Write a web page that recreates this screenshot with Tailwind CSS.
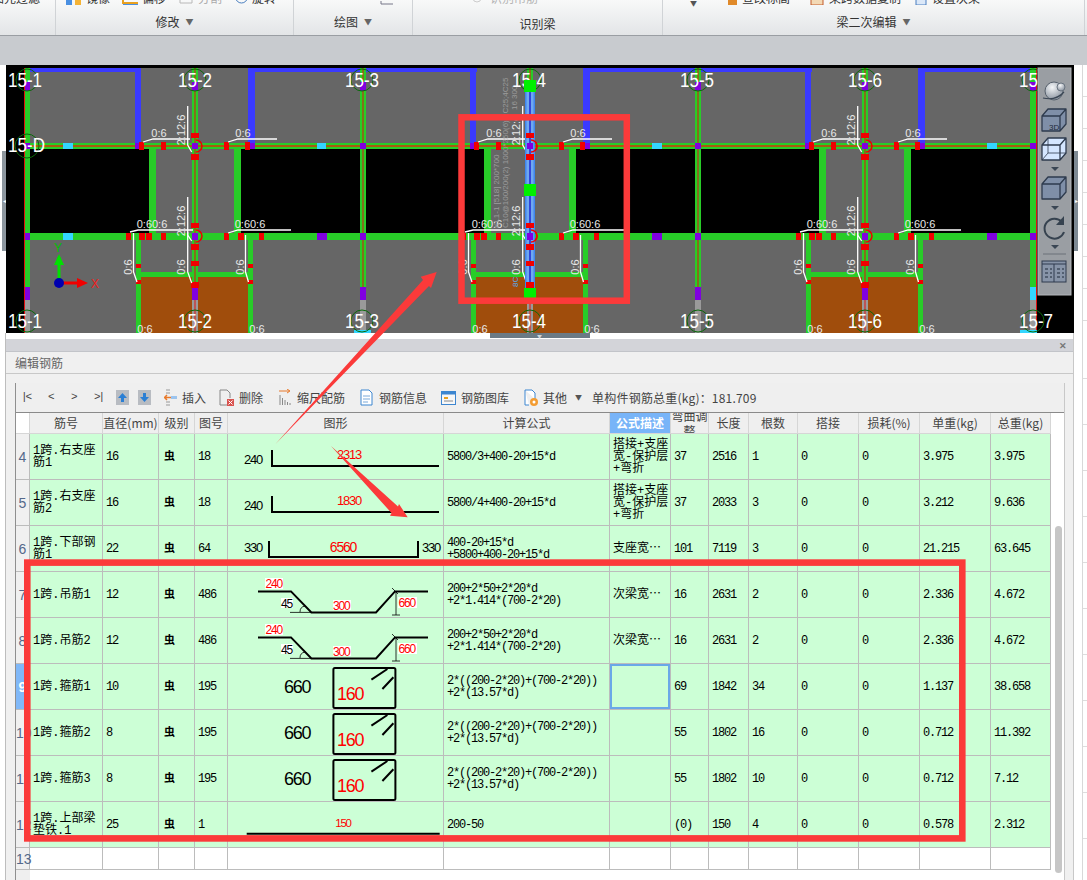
<!DOCTYPE html>
<html lang="zh">
<head>
<meta charset="utf-8">
<title>编辑钢筋</title>
<script src="https://cdn.jsdelivr.net/npm/@tailwindcss/browser@4"></script>
</head>
<body class="m-0">
<div class="relative w-[1087px] h-[880px] overflow-hidden bg-white [font-family:'Noto_Sans_CJK_SC',sans-serif]">

  <!-- Ribbon, cut off at the top -->
  <div class="flex h-[36px] overflow-hidden border-b border-[#9a9ea3] bg-linear-to-b from-[#f8f9f9] to-[#e3e5e7] text-[12px] leading-[14px] text-[#333]">
    <div class="w-[56px] shrink-0 border-r border-[#d0d3d6]">
      <div class="-mt-[9px] -ml-[8px] h-[14px] whitespace-nowrap">图元过滤</div>
    </div>
    <div class="w-[238px] shrink-0 border-r border-[#d0d3d6]">
      <div class="-mt-[9px] flex h-[14px] items-center whitespace-nowrap pl-[10px]">
        <svg class="w-[16px] h-[14px]" viewBox="0 0 16 14"><rect x="0" y="3" width="6" height="11" fill="#4a90e2"/><rect x="9" y="3" width="6" height="11" fill="#f5b335"/></svg>
        <span class="ml-[4px]">镜像</span>
        <svg class="ml-[12px] w-[17px] h-[14px]" viewBox="0 0 17 14"><path d="M1 0V12H16" fill="none" stroke="#e8a020" stroke-width="2"/><path d="M1 13.500H16" stroke="#4a90e2" stroke-width="1"/></svg>
        <span class="ml-[3px]">偏移</span>
        <svg class="ml-[12px] w-[15px] h-[14px]" viewBox="0 0 15 14"><path d="M2 0V12H14V0" fill="none" stroke="#b8b8b8"/></svg>
        <span class="ml-[5px] text-[#aaa]">分割</span>
        <svg class="ml-[13px] w-[13px] h-[14px]" viewBox="0 0 13 14"><circle cx="6.500" cy="6" r="6" fill="none" stroke="#4a7fc0"/></svg>
        <span class="ml-[4px]">旋转</span>
      </div>
      <div class="mt-[10px] flex items-center justify-center gap-[6px]">
        <span>修改</span><span class="text-[8px] text-[#666]">▼</span>
      </div>
    </div>
    <div class="w-[119px] shrink-0 border-r border-[#d0d3d6]">
      <div class="-mt-[9px] flex h-[14px] justify-end pr-[18px]">
        <svg class="w-[14px] h-[14px]" viewBox="0 0 14 14"><path d="M1 13H13M1 13V10" fill="none" stroke="#778"/></svg>
      </div>
      <div class="mt-[10px] flex items-center justify-center gap-[6px]">
        <span>绘图</span><span class="text-[8px] text-[#666]">▼</span>
      </div>
    </div>
    <div class="w-[250px] shrink-0 border-r border-[#d0d3d6]">
      <div class="-mt-[9px] flex h-[14px] items-center whitespace-nowrap pl-[59px] text-[#b5b5b5]">
        <svg class="w-[12px] h-[14px]" viewBox="0 0 12 14"><circle cx="5" cy="7" r="4" fill="none" stroke="#ccc"/></svg>
        <span class="ml-[6px]">识别吊筋</span>
      </div>
      <div class="mt-[12px] text-center">识别梁</div>
    </div>
    <div class="w-[422px] shrink-0 border-r border-[#d0d3d6]">
      <div class="-mt-[9px] flex h-[14px] items-center whitespace-nowrap pl-[27px]">
        <span class="mt-[10px] text-[7px] text-[#555]">▼</span>
        <svg class="ml-[30px] w-[11px] h-[14px]" viewBox="0 0 11 14"><rect x="1" y="4" width="9" height="10" fill="#e08a2a"/></svg>
        <span class="ml-[4px]">查改标高</span>
        <svg class="ml-[20px] w-[14px] h-[14px]" viewBox="0 0 14 14"><rect x="1" y="2" width="12" height="12" fill="#f3d9b5" stroke="#c25a2a"/></svg>
        <span class="ml-[5px]">梁跨数据复制</span>
        <svg class="ml-[14px] w-[12px] h-[14px]" viewBox="0 0 12 14"><rect x="1" y="2" width="10" height="12" fill="#dbe8f8" stroke="#4a7fc0"/></svg>
        <span class="ml-[5px]">设置次梁</span>
      </div>
      <div class="mt-[10px] flex items-center justify-center gap-[6px]">
        <span>梁二次编辑</span><span class="text-[8px] text-[#666]">▼</span>
      </div>
    </div>
  </div>
  <div class="h-[29px] bg-[#c8cbcf]"></div>

  <!-- Drawing area -->
  <div class="flex h-[268px]">
    <div class="w-[6px] shrink-0 bg-white pt-[86px] pl-[2px]">
      <div class="flex h-[100px] w-[4px] items-center justify-center bg-[#8d979f] text-[6px] leading-none text-white">◂</div>
    </div>
    <svg class="block w-[1068px] h-[268px] shrink-0" viewBox="6 65 1068 268" font-family="'Liberation Sans',sans-serif">
      <defs>
        <radialGradient id="ball" cx="0.4" cy="0.3" r="0.8">
          <stop offset="0" stop-color="#f4f6f8"/><stop offset="1" stop-color="#7d8794"/>
        </radialGradient>
        <g id="bay">
          <!-- beams around the axis -->
          <rect x="135" y="68" width="6" height="75" fill="#3a3aff"/>
          <rect x="248" y="68" width="7" height="75" fill="#3a3aff"/>
          <rect x="135" y="143" width="6" height="6" fill="#8000e0"/>
          <rect x="248" y="143" width="7" height="6" fill="#8000e0"/>
          <rect x="149" y="149" width="7" height="84" fill="#28cc28"/>
          <rect x="234" y="149" width="7" height="84" fill="#28cc28"/>
          <rect x="141" y="277" width="107" height="56" fill="#a04d0c"/>
          <rect x="136" y="240" width="5" height="93" fill="#28cc28"/>
          <rect x="248" y="240" width="5" height="93" fill="#28cc28"/>
          <rect x="136" y="272" width="117" height="5" fill="#28cc28"/>
          <!-- axis -->
          <rect x="192" y="68" width="6" height="232" fill="#28cc28"/>
          <rect x="194.500" y="68" width="1" height="232" fill="#e01010"/>
          <rect x="192" y="82" width="6" height="9" fill="#8000e0"/>
          <rect x="192" y="143" width="6" height="6" fill="#8000e0"/>
          <rect x="192" y="233" width="6" height="7" fill="#8000e0"/>
          <rect x="192" y="287" width="6" height="13" fill="#8000e0"/>
          <rect x="192" y="300" width="6" height="33" fill="#9a9a9a"/>
          <rect x="194.500" y="300" width="1" height="33" fill="#e01010"/>
          <!-- red marks -->
          <g fill="#f00000">
            <rect x="139" y="142" width="5" height="8"/><rect x="161" y="142" width="5" height="8"/>
            <rect x="224" y="142" width="5" height="8"/><rect x="245" y="142" width="5" height="8"/>
            <rect x="126" y="233" width="5" height="7"/><rect x="139" y="233" width="6" height="7"/>
            <rect x="146" y="233" width="6" height="7"/><rect x="161" y="233" width="5" height="7"/>
            <rect x="224" y="233" width="5" height="7"/><rect x="238" y="233" width="6" height="7"/>
            <rect x="259" y="233" width="5" height="7"/>
            <rect x="191" y="133" width="8" height="5"/><rect x="191" y="154" width="8" height="6"/>
            <rect x="191" y="223" width="8" height="5"/><rect x="191" y="244" width="8" height="6"/>
            <rect x="191" y="261" width="8" height="5"/><rect x="191" y="282" width="8" height="6"/>
            <rect x="136" y="264" width="5" height="4"/><rect x="136" y="280" width="5" height="4"/>
            <rect x="248" y="264" width="5" height="4"/><rect x="248" y="280" width="5" height="4"/>
          </g>
          <path d="M196 140A6 6 0 0 1 196 152M196 230A6 6 0 0 1 196 242" fill="none" stroke="#f00000" stroke-width="1.500"/>
          <!-- white leader lines -->
          <g fill="none" stroke="#ffffff" stroke-width="1.300">
            <path d="M143 142L153 139H190"/><path d="M228 142L238 139H277"/>
            <path d="M130 232L138 230H193"/><path d="M228 233L238 230H291"/>
            <path d="M187.700 106V145L191.700 152"/><path d="M187.700 197V235L191.700 241"/>
            <path d="M187.700 232V272L191.700 283"/><path d="M133.500 233V272L137 282"/>
            <path d="M245.500 235V272L248.500 282"/>
          </g>
          <g fill="#e8e8e8" font-size="11" text-anchor="middle">
            <text x="159" y="137">0:6</text><text x="243" y="137">0:6</text>
            <text x="152" y="228">0:60:6</text><text x="250" y="228">0:60:6</text>
            <text x="145" y="333">0:6</text><text x="257" y="333">0:6</text>
            <text transform="translate(185 130) rotate(-90)">2:12:6</text>
            <text transform="translate(185 221) rotate(-90)">2:12:6</text>
            <text transform="translate(185 267) rotate(-90)">0:6</text>
            <text transform="translate(132 267) rotate(-90)">0:6</text>
            <text transform="translate(244 267) rotate(-90)">0:6</text>
          </g>
        </g>
      </defs>
      <rect x="6" y="65" width="1068" height="268" fill="#000000"/>
      <rect x="24" y="68" width="1012" height="265" fill="#666666"/>
      <g fill="#000000">
        <rect x="30" y="149" width="119" height="84"/><rect x="241" y="149" width="119" height="84"/>
        <rect x="366" y="149" width="118" height="84"/><rect x="576" y="149" width="119" height="84"/>
        <rect x="701" y="149" width="119" height="84"/><rect x="911" y="149" width="119" height="84"/>
      </g>
      <g fill="#3a3aff">
        <rect x="24" y="68" width="117" height="4"/><rect x="248" y="68" width="229" height="4"/>
        <rect x="584" y="68" width="228" height="4"/><rect x="919" y="68" width="111" height="4"/>
      </g>
      <rect x="24" y="143" width="1012" height="6" fill="#28cc28"/>
      <rect x="24" y="145" width="1012" height="2" fill="#a85a10"/>
      <rect x="24" y="233" width="1012" height="7" fill="#28cc28"/>
      <g fill="#33d6ff">
        <rect x="63" y="143" width="10" height="6"/><rect x="63" y="233" width="10" height="7"/>
        <rect x="317" y="143" width="9" height="6"/><rect x="652" y="143" width="10" height="6"/>
        <rect x="987" y="143" width="10" height="6"/>
      </g>
      <g fill="#8000e0">
        <rect x="317" y="233" width="10" height="7"/><rect x="652" y="233" width="10" height="7"/>
        <rect x="987" y="233" width="10" height="7"/>
      </g>
      <!-- outer axes -->
      <g fill="#28cc28">
        <rect x="25" y="68" width="5" height="232"/><rect x="360" y="68" width="6" height="232"/>
        <rect x="695" y="68" width="6" height="232"/><rect x="1030" y="68" width="6" height="220"/>
      </g>
      <g fill="#e01010">
        <rect x="24" y="68" width="1" height="265"/><rect x="362.500" y="68" width="1" height="232"/>
        <rect x="697.500" y="68" width="1" height="232"/><rect x="1036" y="68" width="1" height="265"/>
      </g>
      <g fill="#8000e0">
        <rect x="25" y="82" width="5" height="9"/><rect x="360" y="82" width="6" height="9"/>
        <rect x="695" y="82" width="6" height="9"/><rect x="1030" y="82" width="6" height="9"/>
        <rect x="25" y="143" width="5" height="6"/><rect x="360" y="143" width="6" height="6"/>
        <rect x="695" y="143" width="6" height="6"/><rect x="1030" y="143" width="6" height="6"/>
        <rect x="25" y="233" width="5" height="7"/><rect x="360" y="233" width="6" height="7"/>
        <rect x="695" y="233" width="6" height="7"/><rect x="1030" y="233" width="6" height="7"/>
        <rect x="25" y="287" width="5" height="13"/><rect x="360" y="287" width="6" height="13"/>
        <rect x="695" y="287" width="6" height="13"/>
      </g>
      <g fill="#9a9a9a">
        <rect x="25" y="300" width="5" height="33"/><rect x="360" y="300" width="6" height="33"/>
        <rect x="695" y="300" width="6" height="33"/><rect x="1030" y="300" width="6" height="33"/>
      </g>
      <rect x="1030" y="287" width="6" height="13" fill="#33d6ff"/>
      <g fill="#33d6ff">
        <rect x="354" y="330" width="17" height="3"/><rect x="521" y="330" width="17" height="3"/>
        <rect x="857" y="330" width="17" height="3"/><rect x="1020" y="330" width="17" height="3"/>
      </g>

      <use href="#bay"/>
      <use href="#bay" x="335"/>
      <use href="#bay" x="670"/>

      <!-- selected beam on axis 15-4 -->
      <rect x="525" y="86" width="10" height="206" fill="#3f86ee"/>
      <rect x="526.500" y="86" width="7" height="206" fill="#6fa8f0"/>
      <rect x="529" y="86" width="2" height="206" fill="#3346d8"/>
      <g fill="#f00000">
        <rect x="526" y="133" width="8" height="5"/><rect x="526" y="154" width="8" height="6"/>
        <rect x="526" y="223" width="8" height="5"/><rect x="526" y="244" width="8" height="6"/>
        <rect x="526" y="261" width="8" height="5"/><rect x="526" y="282" width="8" height="6"/>
      </g>
      <rect x="527" y="143" width="6" height="6" fill="#8000e0"/>
      <rect x="527" y="233" width="6" height="7" fill="#8000e0"/>
      <path d="M531 140A6 6 0 0 1 531 152M531 230A6 6 0 0 1 531 242" fill="none" stroke="#f00000" stroke-width="1.500"/>
      <g fill="#9c9c9c" font-size="8">
        <text transform="translate(499 228) rotate(-90)">KL1-1 [518] 200*700</text>
        <text transform="translate(508 228) rotate(-90)">C10@100/200(2) 1000*250(6) 2C25;4C25</text>
        <text transform="translate(517 110) rotate(-90)">16 300</text>
      </g>
      <text transform="translate(518 287) rotate(-90)" font-size="8" fill="#55aaee">8C</text>

      <!-- axis marks -->
      <g fill="none" stroke="#0a6a0a">
        <circle cx="27" cy="80" r="11"/><circle cx="195" cy="80" r="11"/><circle cx="362" cy="80" r="11"/>
        <circle cx="530" cy="80" r="11"/><circle cx="698" cy="80" r="11"/><circle cx="865" cy="80" r="11"/><circle cx="1033" cy="80" r="11"/>
        <circle cx="27" cy="146" r="12"/>
        <circle cx="27" cy="321" r="11"/><circle cx="195" cy="321" r="11"/><circle cx="362" cy="321" r="11"/>
        <circle cx="530" cy="321" r="11"/><circle cx="698" cy="321" r="11"/><circle cx="865" cy="321" r="11"/><circle cx="1033" cy="321" r="11"/>
      </g>
      <g fill="#ffffff" font-size="20">
        <text x="8" y="87" textLength="34" lengthAdjust="spacingAndGlyphs">15-1</text>
        <text x="178" y="87" textLength="34" lengthAdjust="spacingAndGlyphs">15-2</text>
        <text x="345" y="87" textLength="34" lengthAdjust="spacingAndGlyphs">15-3</text>
        <text x="512" y="87" textLength="34" lengthAdjust="spacingAndGlyphs">15-4</text>
        <text x="680" y="87" textLength="34" lengthAdjust="spacingAndGlyphs">15-5</text>
        <text x="848" y="87" textLength="34" lengthAdjust="spacingAndGlyphs">15-6</text>
        <text x="1019" y="87" textLength="34" lengthAdjust="spacingAndGlyphs">15-7</text>
        <text x="8" y="152" textLength="37" lengthAdjust="spacingAndGlyphs">15-D</text>
        <text x="8" y="328" textLength="34" lengthAdjust="spacingAndGlyphs">15-1</text>
        <text x="178" y="328" textLength="34" lengthAdjust="spacingAndGlyphs">15-2</text>
        <text x="345" y="328" textLength="34" lengthAdjust="spacingAndGlyphs">15-3</text>
        <text x="512" y="328" textLength="34" lengthAdjust="spacingAndGlyphs">15-4</text>
        <text x="680" y="328" textLength="34" lengthAdjust="spacingAndGlyphs">15-5</text>
        <text x="848" y="328" textLength="34" lengthAdjust="spacingAndGlyphs">15-6</text>
        <text x="1019" y="328" textLength="34" lengthAdjust="spacingAndGlyphs">15-7</text>
      </g>
      <g fill="#00f000">
        <rect x="524" y="80" width="12" height="12"/><rect x="524" y="184" width="12" height="12"/><rect x="524" y="288" width="12" height="10"/>
      </g>

      <!-- XY gizmo -->
      <path d="M59 279V257" stroke="#00e000" stroke-width="3"/>
      <path d="M54 265L59 254L64 265Z" fill="#00e000"/>
      <text x="54" y="252" font-size="12" fill="#00c000">Y</text>
      <path d="M59 283H80" stroke="#f00000" stroke-width="3"/>
      <path d="M77 278L88 283L77 288Z" fill="#f00000"/>
      <text x="91" y="288" font-size="12" fill="#f02020">X</text>
      <circle cx="59" cy="283" r="5" fill="#0000b0"/>

      <!-- view tools -->
      <rect x="1038" y="68" width="33" height="227" fill="#9a9ea3" stroke="#b4b7ba"/>
      <circle cx="1054" cy="91" r="9" fill="url(#ball)" stroke="#56606c"/>
      <circle cx="1061" cy="87" r="4" fill="url(#ball)" stroke="#6a7480"/>
      <path d="M1043 98Q1056 101 1064 92" fill="none" stroke="#3a4654" stroke-width="1.200"/>
      <g stroke="#2e3b4e" stroke-width="1.300" stroke-linejoin="round">
        <path d="M1042 116H1060V131H1042ZM1042 116L1048 109H1066V124L1060 131M1060 116L1066 109" fill="#7f8fa8"/>
        <path d="M1042 145H1060V160H1042ZM1042 145L1048 138H1066V153L1060 160M1060 145L1066 138" fill="#d4e6ff"/>
        <path d="M1048 138V153H1066M1048 153L1042 160" fill="none" stroke-width="0.800"/>
        <path d="M1042 184H1060V199H1042ZM1042 184L1048 177H1066V192L1060 199M1060 184L1066 177" fill="#7f8fa8"/>
      </g>
      <text x="1049" y="130" font-size="8" fill="#1e2a3a">3D</text>
      <g fill="#3a4654">
        <path d="M1051 167H1059L1055 171Z"/><path d="M1051 206H1059L1055 210Z"/><path d="M1051 245H1059L1055 249Z"/>
      </g>
      <path d="M1062 222A10 10 0 1 0 1064 232" fill="none" stroke="#36424f" stroke-width="2"/>
      <path d="M1064 216V225H1056Z" fill="#36424f"/>
      <path d="M1043 254H1066" stroke="#6a7078"/>
      <rect x="1042" y="261" width="24" height="21" fill="#8794a8" stroke="#2e3b4e"/>
      <path d="M1042 264H1066M1054 264V282" stroke="#2e3b4e"/>
      <path d="M1045 269H1048M1050 269H1052M1045 273H1048M1050 273H1052M1045 277H1048M1050 277H1052M1057 269H1060M1062 269H1064M1057 273H1060M1062 273H1064M1057 277H1060M1062 277H1064" stroke="#1e2a3a"/>
    </svg>
    <div class="flex flex-1 bg-white">
      <div class="mt-[86px] flex h-[100px] w-[4px] items-center justify-center bg-[#7e8a94] text-[6px] leading-none text-white">▸</div>
      <div class="ml-[4px] flex-1 border-l border-[#d8d8d8] bg-[repeating-linear-gradient(#ffffff_0_31px,#dddddd_31px_32px)]"></div>
    </div>
  </div>

  <!-- Bottom panel -->
  <div class="flex h-[547px]">
    <div class="w-[6px] shrink-0 border-r border-[#bdbdbd] bg-white"></div>
    <div class="w-[1068px] shrink-0 border-r border-[#c8c8c8] bg-[#f0f0f0]">
      <div class="relative flex h-[6px] justify-center bg-white">
        <div class="flex h-[5px] w-[100px] items-center justify-center bg-[#6b7a85] text-[5px] leading-none text-[#cfd5da]">▼</div>
      </div>
      <div class="flex h-[13px] justify-end border-b border-[#c2c4c9] bg-[#d3d4d9] pr-[6px] text-[9px] leading-[13px] font-bold text-[#777]">✕</div>
      <div class="h-[22px] border-b border-[#c8c8c8] pl-[9px] text-[12px] leading-[21px] text-[#666]">编辑钢筋</div>
      <div class="ml-[9px] mt-[9px] h-[497px] w-[1050px] border-l border-r border-l-[#8f8f8f] border-r-[#c8c8c8] bg-[#efefef]">
        <!-- Toolbar -->
        <div class="flex h-[29px] items-center whitespace-nowrap text-[12px] text-[#444]">
          <span class="ml-[5px] w-[10px] [font-family:'Liberation_Mono',monospace] text-[11px] tracking-[-2px]">|&lt;</span>
          <span class="ml-[17px] w-[6px] [font-family:'Liberation_Mono',monospace] text-[11px]">&lt;</span>
          <span class="ml-[17px] w-[6px] [font-family:'Liberation_Mono',monospace] text-[11px]">&gt;</span>
          <span class="ml-[17px] w-[10px] [font-family:'Liberation_Mono',monospace] text-[11px] tracking-[-2px]">&gt;|</span>
          <svg class="ml-[12px] w-[13px] h-[15px]" viewBox="0 0 13 15"><rect width="13" height="15" fill="#b8bcc2"/><path d="M6.500 3L11 8H8V12H5V8H2Z" fill="#2b7fd4"/></svg>
          <svg class="ml-[9px] w-[13px] h-[15px]" viewBox="0 0 13 15"><rect width="13" height="15" fill="#b8bcc2"/><path d="M6.500 12L11 7H8V3H5V7H2Z" fill="#2b7fd4"/></svg>
          <svg class="ml-[13px] w-[13px] h-[17px]" viewBox="0 0 13 17"><path d="M2 1H6M2 4H6M2 13H6M2 16H6" stroke="#999"/><path d="M7 8.500H1M3 6L0.500 8.500L3 11" fill="none" stroke="#e8792a" stroke-width="1.500"/><rect x="7" y="7" width="6" height="3" fill="#9cc4ee"/></svg>
          <span class="ml-[5px]">插入</span>
          <svg class="ml-[13px] w-[15px] h-[17px]" viewBox="0 0 15 17"><path d="M1 1H8L11 4V9M1 1V16H8" fill="none" stroke="#888"/><rect x="8" y="10" width="7" height="7" fill="#d9534f"/><path d="M9.500 11.500L13.500 15.500M13.500 11.500L9.500 15.500" stroke="#fff"/></svg>
          <span class="ml-[5px]">删除</span>
          <svg class="ml-[16px] w-[12px] h-[17px]" viewBox="0 0 12 17"><path d="M0 2H10M8 0L11 2L8 4" fill="none" stroke="#e8792a"/><path d="M1 6V16M3.500 9V16M6 11V16M8.500 13V16M11 14V16" stroke="#888"/></svg>
          <span class="ml-[6px]">缩尺配筋</span>
          <svg class="ml-[15px] w-[13px] h-[17px]" viewBox="0 0 13 17"><path d="M1 1H9L12 4V16H1Z" fill="#fff" stroke="#3d86d0"/><path d="M3 7H10M3 10H10M3 13H8" stroke="#7aa9d9"/></svg>
          <span class="ml-[6px]">钢筋信息</span>
          <svg class="ml-[14px] w-[15px] h-[14px]" viewBox="0 0 15 14"><rect x="0.500" y="0.500" width="14" height="13" fill="#f7f7f7" stroke="#3d86d0"/><rect x="0.500" y="0.500" width="14" height="3" fill="#3d86d0"/><rect x="3" y="6" width="4" height="2" fill="#e8a020"/><path d="M3 10H12" stroke="#888"/></svg>
          <span class="ml-[5px]">钢筋图库</span>
          <svg class="ml-[15px] w-[15px] h-[18px]" viewBox="0 0 15 18"><path d="M1 1H8L11 4V10M1 1V16H5" fill="#fff" stroke="#3d86d0"/><circle cx="10" cy="13" r="4" fill="#f39c32"/><circle cx="10" cy="13" r="1.500" fill="#fff"/></svg>
          <span class="ml-[4px]">其他</span>
          <span class="ml-[8px] text-[7px] text-[#555]">▼</span>
          <span class="ml-[10px] tracking-[0.2px]">单构件钢筋总重(kg)：181.709</span>
        </div>
        <!-- Grid -->
        <div class="relative h-[468px] w-[1048px] overflow-hidden border-t border-[#8a8a8a] bg-white">
          <table class="w-[1035px] table-fixed border-separate border-spacing-0 [font-family:'Liberation_Mono','Noto_Sans_CJK_SC',monospace] text-[12px] leading-[12px] tracking-[-1.200px] text-black [&_td]:border-r [&_td]:border-b [&_td]:border-[#bcbcbc] [&_td]:pl-[3px] [&_td]:align-middle [&_th]:border-r [&_th]:border-b [&_th]:border-[#d6d6d6] [&_th]:bg-[#efefef] [&_th]:p-0 [&_th]:text-[12px] [&_th]:font-normal [&_th]:tracking-normal [&_th]:whitespace-nowrap [&_th]:text-[#444] [&_th]:[font-family:'Noto_Sans_CJK_SC',sans-serif]">
            <colgroup>
              <col class="w-[14px]"><col class="w-[73px]"><col class="w-[56px]"><col class="w-[36px]"><col class="w-[33px]"><col class="w-[216px]"><col class="w-[166px]"><col class="w-[61px]"><col class="w-[38px]"><col class="w-[40px]"><col class="w-[49px]"><col class="w-[61px]"><col class="w-[61px]"><col class="w-[71px]"><col class="w-[60px]">
            </colgroup>
            <thead>
              <tr class="h-[21px]">
                <th class="bg-white!"></th><th>筋号</th><th>直径(mm)</th><th>级别</th><th>图号</th><th>图形</th><th>计算公式</th>
                <th class="bg-[#78b4f8]! font-bold! text-white!">公式描述</th>
                <th><div class="flex h-[20px] items-center justify-center overflow-hidden leading-[15px]"><span>弯曲调<br>整</span></div></th>
                <th>长度</th><th>根数</th><th>搭接</th><th>损耗(%)</th><th>单重(kg)</th><th>总重(kg)</th>
              </tr>
            </thead>
            <tbody class="bg-[#ccffd6] [&_tr]:h-[46px]">
              <tr>
                <td class="bg-[#f0f0f0] pl-0! text-center [font-family:'Liberation_Sans',sans-serif] text-[14px] tracking-normal text-[#54688a]">4</td>
                <td class="tracking-normal">1跨.右支座<br>筋1</td><td>16</td><td class="pl-[5px]! text-[11px] font-bold tracking-normal">虫</td><td>18</td>
                <td class="pl-0!">
                  <svg class="block" width="215" height="45" viewBox="0 0 215 45" font-family="'Liberation Sans',sans-serif" font-size="13">
                    <text x="16" y="30">240</text><path d="M44 16V32H211" fill="none" stroke="#000" stroke-width="2"/><text x="121" y="24.500" text-anchor="middle" fill="#f00">2313</text>
                  </svg>
                </td>
                <td>5800/3+400-20+15*d</td>
                <td class="tracking-normal">搭接+支座<br>宽-保护层<br>+弯折</td>
                <td>37</td><td>2516</td><td>1</td><td>0</td><td>0</td><td>3.975</td><td>3.975</td>
              </tr>
              <tr>
                <td class="bg-[#f0f0f0] pl-0! text-center [font-family:'Liberation_Sans',sans-serif] text-[14px] tracking-normal text-[#54688a]">5</td>
                <td class="tracking-normal">1跨.右支座<br>筋2</td><td>16</td><td class="pl-[5px]! text-[11px] font-bold tracking-normal">虫</td><td>18</td>
                <td class="pl-0!">
                  <svg class="block" width="215" height="45" viewBox="0 0 215 45" font-family="'Liberation Sans',sans-serif" font-size="13">
                    <text x="16" y="30">240</text><path d="M44 16V32H211" fill="none" stroke="#000" stroke-width="2"/><text x="121" y="24.500" text-anchor="middle" fill="#f00">1830</text>
                  </svg>
                </td>
                <td>5800/4+400-20+15*d</td>
                <td class="tracking-normal">搭接+支座<br>宽-保护层<br>+弯折</td>
                <td>37</td><td>2033</td><td>3</td><td>0</td><td>0</td><td>3.212</td><td>9.636</td>
              </tr>
              <tr>
                <td class="bg-[#f0f0f0] pl-0! text-center [font-family:'Liberation_Sans',sans-serif] text-[14px] tracking-normal text-[#54688a]">6</td>
                <td class="tracking-normal">1跨.下部钢<br>筋1</td><td>22</td><td class="pl-[5px]! text-[11px] font-bold tracking-normal">虫</td><td>64</td>
                <td class="pl-0!">
                  <svg class="block" width="215" height="45" viewBox="0 0 215 45" font-family="'Liberation Sans',sans-serif" font-size="13">
                    <text x="16" y="26">330</text><path d="M41 15V31H190V15" fill="none" stroke="#000" stroke-width="2"/><text x="115" y="26" text-anchor="middle" fill="#f00" font-size="14">6560</text><text x="194" y="26">330</text>
                  </svg>
                </td>
                <td>400-20+15*d<br>+5800+400-20+15*d</td>
                <td class="tracking-normal">支座宽⋯</td>
                <td>101</td><td>7119</td><td>3</td><td>0</td><td>0</td><td>21.215</td><td>63.645</td>
              </tr>
              <tr>
                <td class="bg-[#f0f0f0] pl-0! text-center [font-family:'Liberation_Sans',sans-serif] text-[14px] tracking-normal text-[#54688a]">7</td>
                <td class="tracking-normal">1跨.吊筋1</td><td>12</td><td class="pl-[5px]! text-[11px] font-bold tracking-normal">虫</td><td>486</td>
                <td class="pl-0!">
                  <svg class="block" width="215" height="45" viewBox="0 0 215 45" font-family="'Liberation Sans',sans-serif" font-size="12">
                    <path d="M30 19.400H63L83.400 40.400H148L167 19.400H200" fill="none" stroke="#000" stroke-width="2"/>
                    <path d="M62 40.400H83M168 19V43M164 43H172M164 16L170 22M72 40A6 6 0 0 1 77 34" fill="none" stroke="#000" stroke-width="0.800"/>
                    <rect x="37" y="6" width="18" height="11" fill="#fff"/><text x="37.500" y="15.500" fill="#f00">240</text>
                    <rect x="53" y="26" width="12" height="10" fill="#fff"/><text x="53" y="35.500">45</text>
                    <rect x="105" y="28" width="18" height="10" fill="#fff"/><text x="105" y="37.500" fill="#f00">300</text>
                    <rect x="170" y="25" width="19" height="11" fill="#fff"/><text x="170.500" y="35" fill="#f00">660</text>
                  </svg>
                </td>
                <td>200+2*50+2*20*d<br>+2*1.414*(700-2*20)</td>
                <td class="tracking-normal">次梁宽⋯</td>
                <td>16</td><td>2631</td><td>2</td><td>0</td><td>0</td><td>2.336</td><td>4.672</td>
              </tr>
              <tr>
                <td class="bg-[#f0f0f0] pl-0! text-center [font-family:'Liberation_Sans',sans-serif] text-[14px] tracking-normal text-[#54688a]">8</td>
                <td class="tracking-normal">1跨.吊筋2</td><td>12</td><td class="pl-[5px]! text-[11px] font-bold tracking-normal">虫</td><td>486</td>
                <td class="pl-0!">
                  <svg class="block" width="215" height="45" viewBox="0 0 215 45" font-family="'Liberation Sans',sans-serif" font-size="12">
                    <path d="M30 19.400H63L83.400 40.400H148L167 19.400H200" fill="none" stroke="#000" stroke-width="2"/>
                    <path d="M62 40.400H83M168 19V43M164 43H172M164 16L170 22M72 40A6 6 0 0 1 77 34" fill="none" stroke="#000" stroke-width="0.800"/>
                    <rect x="37" y="6" width="18" height="11" fill="#fff"/><text x="37.500" y="15.500" fill="#f00">240</text>
                    <rect x="53" y="26" width="12" height="10" fill="#fff"/><text x="53" y="35.500">45</text>
                    <rect x="105" y="28" width="18" height="10" fill="#fff"/><text x="105" y="37.500" fill="#f00">300</text>
                    <rect x="170" y="25" width="19" height="11" fill="#fff"/><text x="170.500" y="35" fill="#f00">660</text>
                  </svg>
                </td>
                <td>200+2*50+2*20*d<br>+2*1.414*(700-2*20)</td>
                <td class="tracking-normal">次梁宽⋯</td>
                <td>16</td><td>2631</td><td>2</td><td>0</td><td>0</td><td>2.336</td><td>4.672</td>
              </tr>
              <tr>
                <td class="bg-[#80b8f8] pl-0! text-center [font-family:'Liberation_Sans',sans-serif] text-[14px] font-bold tracking-normal text-white">9</td>
                <td class="tracking-normal">1跨.箍筋1</td><td>10</td><td class="pl-[5px]! text-[11px] font-bold tracking-normal">虫</td><td>195</td>
                <td class="pl-0!">
                  <svg class="block" width="215" height="45" viewBox="0 0 215 45" font-family="'Liberation Sans',sans-serif" font-size="18">
                    <text x="56" y="29.400">660</text><rect x="105.400" y="4" width="62" height="40" rx="1.500" fill="none" stroke="#000" stroke-width="2"/><text x="109" y="35.700" fill="#f00">160</text><path d="M143.400 15.700L159.400 5M154.400 25L165.400 13.300" stroke="#000" stroke-width="2"/>
                  </svg>
                </td>
                <td>2*((200-2*20)+(700-2*20))<br>+2*(13.57*d)</td>
                <td class="pl-0!"><div class="h-[45px] border-2 border-[#6aa8e8]"></div></td>
                <td>69</td><td>1842</td><td>34</td><td>0</td><td>0</td><td>1.137</td><td>38.658</td>
              </tr>
              <tr>
                <td class="bg-[#f0f0f0] pl-0! text-center [font-family:'Liberation_Sans',sans-serif] text-[14px] tracking-normal text-[#54688a]">10</td>
                <td class="tracking-normal">1跨.箍筋2</td><td>8</td><td class="pl-[5px]! text-[11px] font-bold tracking-normal">虫</td><td>195</td>
                <td class="pl-0!">
                  <svg class="block" width="215" height="45" viewBox="0 0 215 45" font-family="'Liberation Sans',sans-serif" font-size="18">
                    <text x="56" y="29.400">660</text><rect x="105.400" y="4" width="62" height="40" rx="1.500" fill="none" stroke="#000" stroke-width="2"/><text x="109" y="35.700" fill="#f00">160</text><path d="M143.400 15.700L159.400 5M154.400 25L165.400 13.300" stroke="#000" stroke-width="2"/>
                  </svg>
                </td>
                <td>2*((200-2*20)+(700-2*20))<br>+2*(13.57*d)</td>
                <td></td>
                <td>55</td><td>1802</td><td>16</td><td>0</td><td>0</td><td>0.712</td><td>11.392</td>
              </tr>
              <tr>
                <td class="bg-[#f0f0f0] pl-0! text-center [font-family:'Liberation_Sans',sans-serif] text-[14px] tracking-normal text-[#54688a]">11</td>
                <td class="tracking-normal">1跨.箍筋3</td><td>8</td><td class="pl-[5px]! text-[11px] font-bold tracking-normal">虫</td><td>195</td>
                <td class="pl-0!">
                  <svg class="block" width="215" height="45" viewBox="0 0 215 45" font-family="'Liberation Sans',sans-serif" font-size="18">
                    <text x="56" y="29.400">660</text><rect x="105.400" y="4" width="62" height="40" rx="1.500" fill="none" stroke="#000" stroke-width="2"/><text x="109" y="35.700" fill="#f00">160</text><path d="M143.400 15.700L159.400 5M154.400 25L165.400 13.300" stroke="#000" stroke-width="2"/>
                  </svg>
                </td>
                <td>2*((200-2*20)+(700-2*20))<br>+2*(13.57*d)</td>
                <td></td>
                <td>55</td><td>1802</td><td>10</td><td>0</td><td>0</td><td>0.712</td><td>7.12</td>
              </tr>
              <tr>
                <td class="bg-[#f0f0f0] pl-0! text-center [font-family:'Liberation_Sans',sans-serif] text-[14px] tracking-normal text-[#54688a]">12</td>
                <td class="tracking-normal">1跨.上部梁<br>垫铁.1</td><td>25</td><td class="pl-[5px]! text-[11px] font-bold tracking-normal">虫</td><td>1</td>
                <td class="pl-0!">
                  <svg class="block" width="215" height="45" viewBox="0 0 215 45" font-family="'Liberation Sans',sans-serif" font-size="11.500">
                    <text x="115" y="25.400" text-anchor="middle" fill="#f00">150</text><path d="M18.700 31.700H211.700" stroke="#000" stroke-width="2"/>
                  </svg>
                </td>
                <td>200-50</td>
                <td></td>
                <td>(0)</td><td>150</td><td>4</td><td>0</td><td>0</td><td>0.578</td><td>2.312</td>
              </tr>
              <tr class="h-[22px]! bg-white">
                <td class="bg-[#f0f0f0] pl-0! text-center [font-family:'Liberation_Sans',sans-serif] text-[14px] tracking-normal text-[#54688a]">13</td>
                <td></td><td></td><td></td><td></td><td></td><td></td><td></td><td></td><td></td><td></td><td></td><td></td><td></td><td></td>
              </tr>
              <tr class="h-[20px]! bg-white">
                <td class="border-0! bg-[#efefef]"></td><td class="border-0!" colspan="14"></td>
              </tr>
            </tbody>
          </table>
          <div class="absolute top-[113px] left-[1039px] h-[347px] w-[7px] rounded-full bg-[#c6c6c6]"></div>
        </div>
      </div>
    </div>
    <div class="flex flex-1 bg-white">
      <div class="ml-[8px] flex-1 border-l border-[#d8d8d8] bg-[repeating-linear-gradient(#ffffff_0_45px,#dddddd_45px_46px)]"></div>
    </div>
  </div>

  <!-- Red hand-drawn annotations over the screenshot -->
  <svg class="pointer-events-none absolute top-0 left-0 w-[1087px] h-[880px]" viewBox="0 0 1087 880">
    <rect x="461.500" y="117.300" width="165.300" height="183.400" fill="none" stroke="#fb3a3a" stroke-width="6.500"/>
    <rect x="27.300" y="562.600" width="935" height="275.800" fill="none" stroke="#fb3a3a" stroke-width="6.600"/>
    <path d="M275.500 444L423 280L420.700 276.700L436.700 272L431 288L429 286Z" fill="#fb3a3a"/>
    <path d="M331 446L398 506.500L399 504L407.700 517.300L390 515.700L391.500 513Z" fill="#fb3a3a"/>
  </svg>
</div>
</body>
</html>
